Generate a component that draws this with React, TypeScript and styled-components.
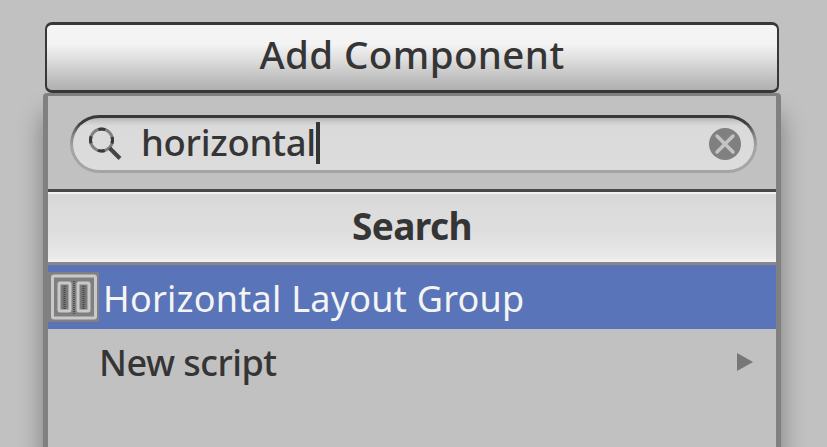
import React from "react";
import styled, { createGlobalStyle } from "styled-components";

const GlobalStyle = createGlobalStyle`
  * { box-sizing: border-box; }
  body { margin: 0; background: #c1c1c1; }
`;

const Inspector = styled.main`
  width: 827px;
  height: 447px;
  overflow: hidden;
  padding: 22px 46px 0 43px;
  background: #c1c1c1;
  font-family: "Noto Sans", "Open Sans", sans-serif;
  color: #353535;
`;

const AddButton = styled.button`
  display: flex;
  align-items: center;
  justify-content: center;
  width: 734px;
  height: 71px;
  margin: 0 2px;
  padding: 0;
  border: 3px solid #383838;
  border-left-width: 2px;
  border-right-width: 2px;
  border-radius: 7px;
  background: linear-gradient(#f5f5f5 0%, #f3f3f3 30%, #dedede 53%, #c4c4c4 78%, #b0b0b0 100%);
  color: inherit;
  font-family: inherit;
`;

const Label = styled.span<{ $size: number; $spacing: number; $weight?: number; $lift?: number }>`
  font-size: ${(p) => p.$size}px;
  font-weight: ${(p) => p.$weight ?? 500};
  letter-spacing: ${(p) => p.$spacing}px;
  line-height: 50px;
  white-space: pre;
  padding-bottom: ${(p) => p.$lift ?? 0}px;
`;

const Popup = styled.section`
  width: 738px;
  height: 380px;
  border: 5px solid #808080;
  border-top-width: 3px;
  border-radius: 4px 4px 0 0;
  background: #c1c1c1;
  box-shadow: 0 22px 24px rgba(0, 0, 0, 0.36);
`;

const SearchArea = styled.div`
  height: 96px;
  padding: 19px 19px 0 22px;
  border-bottom: 3px solid #484848;
`;

const SearchField = styled.div`
  display: flex;
  align-items: center;
  height: 58px;
  padding: 0 12px 0 15px;
  border: 3px solid transparent;
  border-radius: 29px;
  background:
    linear-gradient(#b5b5b5 0, #cbcbcb 4px, #dadada 8px, #dcdcdc 100%) padding-box,
    linear-gradient(#383838 0, #3c3c3c 8px, #858585 20px, #a4a4a4 32px, #a4a4a4 100%) border-box;
`;

const SearchIcon = styled.svg`
  flex: none;
  width: 36px;
  height: 36px;
  margin-right: 17px;
`;

const Caret = styled.i`
  width: 4px;
  height: 42px;
  margin-bottom: 2px;
  background: #353535;
`;

const ClearIcon = styled.svg`
  width: 34px;
  height: 34px;
  margin-left: auto;
`;

const Heading = styled.header`
  display: flex;
  align-items: center;
  justify-content: center;
  height: 73px;
  border-top: 2px solid #f2f2f2;
  border-bottom: 3px solid #888;
  background: linear-gradient(#d8d8d8, #dcdcdc 25%, #dddddd 52%, #e9e9e9 92%, #f4f4f4);
`;

const Row = styled.div<{ $selected?: boolean }>`
  display: flex;
  align-items: center;
  height: ${(p) => (p.$selected ? 64 : 68)}px;
  padding-left: ${(p) => (p.$selected ? 0 : 51)}px;
  padding-right: 22px;
  background: ${(p) => (p.$selected ? "#5974b8" : "#c1c1c1")};
  color: ${(p) => (p.$selected ? "#f4f4f4" : "inherit")};
  ${Label} {
    margin-top: ${(p) => (p.$selected ? 3 : 0)}px;
  }
`;

const LayoutIcon = styled.svg`
  flex: none;
  width: 51px;
  height: 50px;
  margin-right: 4px;
`;

const Chevron = styled.svg`
  width: 18px;
  height: 20px;
  margin-left: auto;
  margin-bottom: 2px;
`;

export default function App() {
  return (
    <Inspector>
      <GlobalStyle />
      <AddButton>
        <Label $size={38.5} $spacing={0.4} $lift={8}>Add Component</Label>
      </AddButton>
      <Popup>
        <SearchArea>
          <SearchField>
            <SearchIcon viewBox="0 0 36 36" fill="none">
              <circle cx="13.5" cy="14" r="11" stroke="#808080" strokeWidth="3" />
              <circle cx="13.5" cy="14" r="11" stroke="#393939" strokeWidth="3" strokeDasharray="7 10.28" strokeDashoffset="3.5" />
              <path d="M21.5 22L32 32.5" stroke="#444" strokeWidth="4" />
            </SearchIcon>
            <Label $size={36.5} $spacing={-0.3} $lift={4}>horizontal</Label>
            <Caret />
            <ClearIcon viewBox="0 0 34 34">
              <circle cx="17" cy="17" r="16" fill="#808080" />
              <path d="M9 9L25 25M25 9L9 25" stroke="#c4c4c4" strokeWidth="3.5" strokeLinecap="round" />
            </ClearIcon>
          </SearchField>
        </SearchArea>
        <Heading>
          <Label $size={37} $spacing={-0.6} $weight={700} $lift={5}>Search</Label>
        </Heading>
        <Row $selected>
          <LayoutIcon viewBox="0 0 51 50" fill="none">
            <path d="M0 0H51V50H0Z" fill="#808080" />
            <rect x="4.5" y="4" width="43" height="42" rx="1.5" stroke="#c9c9c9" strokeWidth="3" />
            <path d="M26 9V42" stroke="#505050" strokeWidth="2" strokeDasharray="1 1" />
            <rect x="11" y="11" width="11" height="28" rx="1" stroke="#c9c9c9" strokeWidth="3" />
            <rect x="30" y="11" width="11" height="28" rx="1" stroke="#c9c9c9" strokeWidth="3" />
            <path d="M16.5 13V37M35.5 13V37" stroke="#777" strokeWidth="6" />
            <path d="M16.5 14V37M35.5 14V37" stroke="#444" strokeWidth="2" strokeDasharray="1 1" />
          </LayoutIcon>
          <Label $size={36} $spacing={0.25} $weight={450}>Horizontal Layout Group</Label>
        </Row>
        <Row>
          <Label $size={36} $spacing={-0.5}>New script</Label>
          <Chevron viewBox="0 0 18 20">
            <path d="M1 1L17 10L1 19Z" fill="#777" />
          </Chevron>
        </Row>
      </Popup>
    </Inspector>
  );
}
